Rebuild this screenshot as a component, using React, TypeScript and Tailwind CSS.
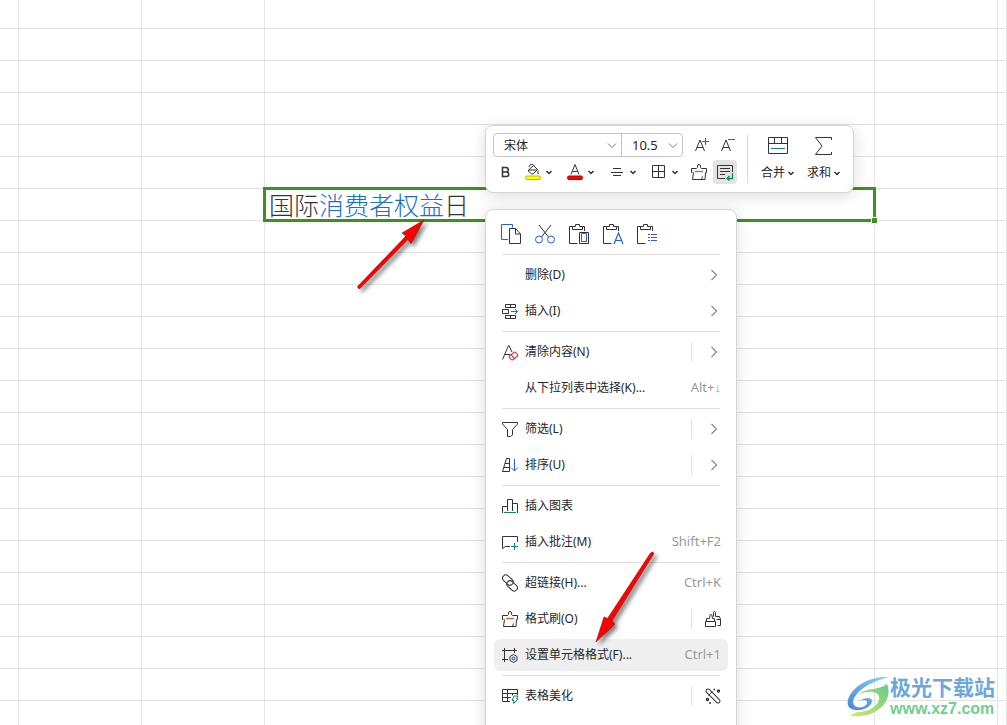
import type { ReactNode } from 'react'

const ink = '#333333'
const blue = '#2a5bd7'
const green = '#0f8a5f'

function Icon({ w = 16, h = 16, children }: { w?: number; h?: number; children: ReactNode }) {
  return (
    <svg
      width={w}
      height={h}
      viewBox={`0 0 ${w} ${h}`}
      fill="none"
      stroke={ink}
      className="shrink-0 overflow-visible"
      aria-hidden="true"
    >
      {children}
    </svg>
  )
}

function Caret() {
  return (
    <Icon w={7} h={5}>
      <path d="M.5 1l2.5 2.5L5.5 1" strokeWidth="1.5" />
    </Icon>
  )
}

function Brush() {
  return (
    <Icon>
      <path d="M1.5 8.5h-1v-4h5l1-1V2a1.5 1.500 0 0 1 3 0v1.500l1 1h5v4h-1M2.500 8.500l-1 7h12.500l.5-7M10.500 15.500l1-3" />
      <path d="M4 7.500h8" stroke="#d9632b" strokeWidth="1.4" />
    </Icon>
  )
}

function Clipboard({ children }: { children: ReactNode }) {
  return (
    <Icon w={21} h={21}>
      <path d="M3.5 2.5h-3v17h8M13.5 2.5h2V7" />
      <path d="M3.5 5.5v-3h3v-2h4v2h3v3z" />
      {children}
    </Icon>
  )
}

const clipboardActions = [
  {
    name: '复制',
    icon: (
      <Icon w={21} h={21}>
        <path d="M7 15.5H.5V.5h11v3" stroke={blue} />
        <path d="M8.5 19.5v-15h6l5 5.5v9.5zM14.5 4.5V10h5" />
      </Icon>
    ),
  },
  {
    name: '剪切',
    icon: (
      <Icon w={21} h={21}>
        <path d="M4 1l9.500 12M16 1L6.500 13" />
        <circle cx="4" cy="15.5" r="3.5" stroke={blue} />
        <circle cx="16" cy="15.5" r="3.5" stroke={blue} />
      </Icon>
    ),
  },
  {
    name: '粘贴',
    icon: (
      <Clipboard>
        <path d="M10.5 8.5h9v11h-9z" />
        <path d="M12.5 9.5h5v8h-5z" stroke={blue} />
      </Clipboard>
    ),
  },
  {
    name: '粘贴为数值',
    icon: (
      <Clipboard>
        <path d="M11 20l4.500-11L20 20M12.500 16.500h6" stroke={blue} strokeWidth="1.2" />
      </Clipboard>
    ),
  },
  {
    name: '选择性粘贴',
    icon: (
      <Clipboard>
        <path d="M11 10.5h2M14 10.5h6M11 13.5h2M14 13.5h6M11 16.5h2M14 16.5h6" stroke={blue} />
      </Clipboard>
    ),
  },
]

type Item = {
  label: string
  icon?: ReactNode
  keys?: string
  more?: ReactNode
  split?: boolean
  active?: boolean
}

const chevron = (
  <Icon>
    <path d="M6.5 3l5 5-5 5" stroke="#8a8a8a" strokeWidth="1.2" />
  </Icon>
)

const groups: Item[][] = [
  [
    { label: '删除(D)', more: chevron },
    {
      label: '插入(I)',
      more: chevron,
      icon: (
        <Icon>
          <path d="M3.5 1.5h10v3h-10zM8.5 1.5v3M.5 6.5h6v4h-6zM3.5 12.5h10v3h-10zM8.5 12.5v3" />
          <path d="M9 8.5h6.5M13 6l2.5 2.5L13 11" stroke={green} />
        </Icon>
      ),
    },
  ],
  [
    {
      label: '清除内容(N)',
      more: chevron,
      split: true,
      icon: (
        <Icon>
          <path d="M.5 15.5l6-14h.5L10 8M3 10.5h5" />
          <g stroke="#cf3a55" strokeWidth="1.2" transform="rotate(-38 11.5 12)">
            <rect x="7.5" y="9.5" width="8" height="5" rx="1.5" />
            <path d="M10.5 9.5v5" />
          </g>
        </Icon>
      ),
    },
    { label: '从下拉列表中选择(K)...', keys: 'Alt+↓' },
  ],
  [
    {
      label: '筛选(L)',
      more: chevron,
      split: true,
      icon: (
        <Icon>
          <path d="M.5 1.5h15V3l-5 5.5V14l-2 1.5h-3v-7L.5 3z" />
        </Icon>
      ),
    },
    {
      label: '排序(U)',
      more: chevron,
      split: true,
      icon: (
        <Icon>
          <path d="M.5 14.5l4-13h3v13zM3 6.5h4.5M2 10.5h5.5" />
          <path d="M12.5 2v12M9 10.5l3.5 3.5 3.5-3.5" stroke={blue} />
        </Icon>
      ),
    },
  ],
  [
    {
      label: '插入图表',
      icon: (
        <Icon>
          <path d="M.5 15V8.5h5M5.5 13V1.5h5V13M10.5 5.5h5V15" />
          <path d="M2 14.5h12" stroke={green} />
        </Icon>
      ),
    },
    {
      label: '插入批注(M)',
      keys: 'Shift+F2',
      icon: (
        <Icon>
          <path d="M15.5 8V2.5H.5v12l3-2H8" />
          <path d="M9 12.5h7M12.5 9v7" stroke={green} />
        </Icon>
      ),
    },
  ],
  [
    {
      label: '超链接(H)...',
      keys: 'Ctrl+K',
      icon: (
        <Icon>
          <g transform="rotate(42 8 8)">
            <rect x="-1.5" y="4" width="12" height="6.5" rx="3.2" />
            <rect x="5.5" y="5.5" width="12" height="6.5" rx="3.2" />
          </g>
        </Icon>
      ),
    },
    {
      label: '格式刷(O)',
      split: true,
      icon: <Brush />,
      more: (
        <Icon>
          <path d="M1.5 10.5v-3h3l.5-3a1 1 0 0 1 2 0l.5 3h2v3M.5 10.5h10v5H.5z" />
          <path d="M8.5 5.5v-4a1 1 0 0 1 2 0v4h4l1 3v6h-3M11.500 8.500h4" />
        </Icon>
      ),
    },
    {
      label: '设置单元格格式(F)...',
      keys: 'Ctrl+1',
      active: true,
      icon: (
        <Icon>
          <path d="M0 3.5h15M2.5 1v14M12.5 1v5M0 12.5h6" />
          <path d="M11.5 7.5l3.5 2v4l-3.5 2-3.5-2v-4z" />
          <circle cx="11.5" cy="11.5" r="1.5" stroke={blue} fill="#9db8f2" />
        </Icon>
      ),
    },
  ],
  [
    {
      label: '表格美化',
      split: true,
      icon: (
        <Icon>
          <path d="M8 13.5H.5v-12h15V7M.5 5.5h15M.5 9.5H9M5.5 1.5v12M10.5 5.5v2" />
          <path d="M12 8h4l-1.5 3H16l-4.5 4.5.5-3h-2z" stroke={green} />
        </Icon>
      ),
      more: (
        <Icon>
          <rect x="-1" y="6" width="18" height="4" rx="2" transform="rotate(45 8 8)" />
          <path d="M3.5 7.5l4-4" />
          <circle cx="13.5" cy="3" r="1" strokeWidth="1.4" />
          <circle cx="2.5" cy="11.5" r="1" strokeWidth="1.4" />
          <path d="M4 15h2M8.5 1.500h1.500" strokeWidth="1.400" />
        </Icon>
      ),
    },
  ],
]

function MenuRow({ item }: { item: Item }) {
  return (
    <li className={`flex h-8 items-center rounded-md ${item.active ? 'bg-[#efefef]' : ''}`}>
      <button type="button" className="flex h-full flex-1 items-center gap-[7px] pl-2 text-left whitespace-nowrap">
        <span className="flex h-4 w-4 shrink-0">{item.icon}</span>
        {item.label}
      </button>
      {item.keys && (
        <kbd className="pr-[7px] font-['Noto_Sans','Liberation_Sans',sans-serif] text-[13px] text-[#999999]">
          {item.keys}
        </kbd>
      )}
      {item.more && (
        <button
          type="button"
          aria-label={`${item.label} 更多`}
          className={`h-5 w-[37px] border-l pl-[13px] ${item.split ? 'border-[#e0e0e0]' : 'border-transparent'}`}
        >
          {item.more}
        </button>
      )}
    </li>
  )
}

function ContextMenu() {
  return (
    <div className="absolute top-[209px] left-[485px] h-[560px] w-[252px] rounded-lg border border-[#d4d4d4] bg-white px-2 pt-[14px] text-xs text-[#262626] shadow-[0_3px_16px_rgba(0,0,0,0.14)]">
      <div className="flex gap-[13px] pl-[7px]">
        {clipboardActions.map((action) => (
          <button key={action.name} type="button" aria-label={action.name}>
            {action.icon}
          </button>
        ))}
      </div>
      <div className="mt-[9px]">
        {groups.map((items) => (
          <div key={items[0].label}>
            <hr className="mx-2 border-[#dedede]" />
            <ul className="flex flex-col gap-1 py-1">
              {items.map((item) => (
                <MenuRow key={item.label} item={item} />
              ))}
            </ul>
          </div>
        ))}
      </div>
    </div>
  )
}

function ToolSelect({ label, value, className }: { label: string; value: string; className: string }) {
  return (
    <div className={`relative h-6 border border-[#c4c4c4] ${className}`}>
      <select
        aria-label={label}
        defaultValue={value}
        className="h-full w-full appearance-none bg-transparent pt-px pl-[10px] text-[#262626] outline-none"
      >
        <option>{value}</option>
      </select>
      <svg
        width="10"
        height="6"
        viewBox="0 0 10 6"
        fill="none"
        stroke="#777777"
        className="pointer-events-none absolute top-[9px] right-1"
      >
        <path d="M1 .5l4 4 4-4" />
      </svg>
    </div>
  )
}

function MiniToolbar() {
  return (
    <div className="absolute top-[125px] left-[485px] flex h-[68px] w-[369px] rounded-lg border border-[#d4d4d4] bg-white pt-[7px] pl-[7px] text-xs text-[#262626] shadow-[0_3px_16px_rgba(0,0,0,0.14)]">
      <div className="flex flex-col gap-[3px]">
        <div className="flex items-center">
          <ToolSelect label="字体" value="宋体" className="w-[129px] rounded-l" />
          <ToolSelect label="字号" value="10.5" className="-ml-px w-[62px] rounded-r text-[13px]" />
          <button type="button" aria-label="增大字号" className="ml-3">
            <Icon>
              <path d="M.5 14L5 3l4.5 11M2 10.5h6" />
              <path d="M7 4.5h7M10.5 1v7" stroke={blue} />
            </Icon>
          </button>
          <button type="button" aria-label="减小字号" className="ml-[10px]">
            <Icon>
              <path d="M.5 14L5 3l4.5 11M2 10.5h6" />
              <path d="M7 2.5h7" stroke={blue} />
            </Icon>
          </button>
        </div>
        <div className="flex h-6 items-center">
          <button type="button" aria-label="加粗" className="flex w-6 justify-center">
            <Icon w={9} h={12}>
              <path
                d="M1.500 1.500h3.500a2 2 0 0 1 0 4.500H1.500zM1.500 6h4a2 2 0 0 1 0 4.500h-4z"
                strokeWidth="1.500"
              />
            </Icon>
          </button>
          <button type="button" aria-label="填充颜色" className="ml-2 flex w-7 items-center justify-between">
            <Icon>
              <path d="M3.500 6l5-4.500 4 4L8 10H6.500L3.500 7zM4 3C4.500-.5 9-.5 9.500 3M3.500 6h8.500M13 6.500V10" />
              <rect x=".5" y="12" width="15" height="3.500" rx="1.500" fill="#ffff00" stroke="#b9b900" />
            </Icon>
            <Caret />
          </button>
          <button type="button" aria-label="字体颜色" className="ml-[14px] flex w-7 items-center justify-between">
            <Icon>
              <path d="M4 10.5L8 .5l4 10M5.500 7.500h5" />
              <rect x=".5" y="12" width="15" height="3.500" rx="1.500" fill="#ff0000" stroke="#c80000" />
            </Icon>
            <Caret />
          </button>
          <button type="button" aria-label="对齐" className="ml-4 flex w-[26px] items-center justify-between">
            <Icon w={12} h={10}>
              <path d="M2 1.5h8M0 5.5h12M2 8.500h8" />
            </Icon>
            <Caret />
          </button>
          <button type="button" aria-label="边框" className="ml-[15px] flex w-[27px] items-center justify-between">
            <Icon w={14} h={14}>
              <path d="M.5 .5h12v12H.5zM6.5 .5v12M.5 6.5h12" />
            </Icon>
            <Caret />
          </button>
          <button type="button" aria-label="格式刷" className="ml-3">
            <Brush />
          </button>
          <button type="button" aria-label="自动换行" className="ml-[6px] flex h-6 w-6 items-center justify-center rounded bg-[#e3e3e3]">
            <Icon>
              <path d="M8 14.5H.5v-13h15V8M3 4.500h10M3 7.500h10M3 10.500h5" />
              <path d="M15.500 9v5.500H10M12.500 12L10 14.500l2.500 2" stroke={green} strokeWidth="1.300" />
            </Icon>
          </button>
        </div>
      </div>
      <div className="mt-[2px] ml-[10px] h-12 w-px bg-[#dadada]" />
      <button type="button" className="ml-[13px] flex w-[34px] flex-col items-center justify-between pt-1 pb-[10px]">
        <Icon w={20} h={18}>
          <path d="M.5 .5h19v16H.5zM.5 6.500h19M6.500 .5v6M13.500 .5v6" />
          <path d="M3 11.500h14" stroke={green} />
        </Icon>
        <span className="flex items-center gap-[3px] leading-[18px] whitespace-nowrap">
          合并
          <Caret />
        </span>
      </button>
      <button type="button" className="ml-3 flex w-[34px] flex-col items-center justify-between pt-1 pb-[10px]">
        <Icon w={18} h={19}>
          <path d="M16.500 3V.5H.5L7 9 .5 17.500h16V15" />
        </Icon>
        <span className="flex items-center gap-[3px] leading-[18px] whitespace-nowrap">
          求和
          <Caret />
        </span>
      </button>
    </div>
  )
}

function SheetGrid() {
  const rows = Array.from({ length: 23 }, (_, i) => i)
  return (
    <table className="w-full table-fixed border-separate border-spacing-0">
      <colgroup>
        <col className="w-[19px]" />
        <col className="w-[123px]" />
        <col className="w-[123px]" />
        <col className="w-[610px]" />
        <col className="w-[123px]" />
        <col />
      </colgroup>
      <tbody>
        {rows.map((r) => (
          <tr key={r} className={r === 0 ? 'h-[29px]' : 'h-8'}>
            {[0, 1, 2, 3, 4, 5].map((c) => (
              <td key={c} className="border-r border-b border-[#e3e3e3] p-0">
                {r === 6 && c === 3 && <SelectedCell />}
              </td>
            ))}
          </tr>
        ))}
      </tbody>
    </table>
  )
}

function SelectedCell() {
  return (
    <div className="relative h-[31px]">
      <div className="absolute -inset-[2px] flex items-center border-3 border-[#3f8f22] pl-[3px] text-[25px] leading-7 font-light whitespace-nowrap text-[#333333]">
        国际<span className="text-[#1a6fc4]">消费者权益</span>日
        <span className="absolute -right-[4px] -bottom-[4px] h-[6px] w-[6px] border-t border-l border-white bg-[#3f8f22]" />
      </div>
    </div>
  )
}

function Arrows() {
  return (
    <svg
      viewBox="0 0 320 440"
      className="pointer-events-none absolute top-[210px] left-[350px] h-[440px] w-[320px] drop-shadow-[3px_3px_2px_rgba(0,0,0,0.5)]"
      aria-hidden="true"
    >
      <g fill="#ff0000" stroke="#8f1010" strokeWidth="0.6">
        <path d="M74 10L52 23l4 3L7.5 76.500q0 2.500 2.500 2L58 29.500l3 4z" />
        <path d="M246 432l8-25 3.500 1.500L300.500 343q2-2 3.500.5L262 411l3 3z" />
      </g>
    </svg>
  )
}

function Watermark() {
  return (
    <div className="absolute right-3 bottom-[7px] flex items-center font-['Liberation_Sans','Noto_Sans_CJK_SC',sans-serif] font-bold">
      <svg width="44" height="40" viewBox="0 0 44 40" fill="none" aria-hidden="true">
        <defs>
          <linearGradient id="swirl-blue" x1="0" y1="1" x2="1" y2="0">
            <stop offset="0" stopColor="#4a86d6" />
            <stop offset="1" stopColor="#8ed3f0" />
          </linearGradient>
          <linearGradient id="swirl-green" x1="0" y1="1" x2="1" y2="0">
            <stop offset="0" stopColor="#d8e56f" />
            <stop offset="1" stopColor="#62cb8e" />
          </linearGradient>
        </defs>
        <path
          d="M44 0C27-1 11 6 4 18c-6 11 0 16 10 15 7-1 12-5 12-9 0-4-7-4-12 0 4-2 8-1 7 2-1 4-8 6-12 3C2 23 16 6 44 0z"
          fill="url(#swirl-blue)"
        />
        <path
          d="M41 7c4 9 0 20-9 26-8 6-19 7-28 6 4-3 6-4 9-4 8 0 18-5 20-12 2-8-9-11-21-5C20 10 32 14 41 7z"
          fill="url(#swirl-green)"
        />
      </svg>
      <div>
        <div className="text-[21px] leading-6 whitespace-nowrap text-[#6da6de]">极光下载站</div>
        <a href="#" className="block text-base leading-[18px] text-[#6fce90]">
          www.xz7.com
        </a>
      </div>
    </div>
  )
}

export default function App() {
  return (
    <main className="relative h-screen w-full overflow-hidden bg-white font-['Noto_Sans','Noto_Sans_CJK_SC',sans-serif]">
      <SheetGrid />
      <MiniToolbar />
      <ContextMenu />
      <Arrows />
      <Watermark />
    </main>
  )
}
